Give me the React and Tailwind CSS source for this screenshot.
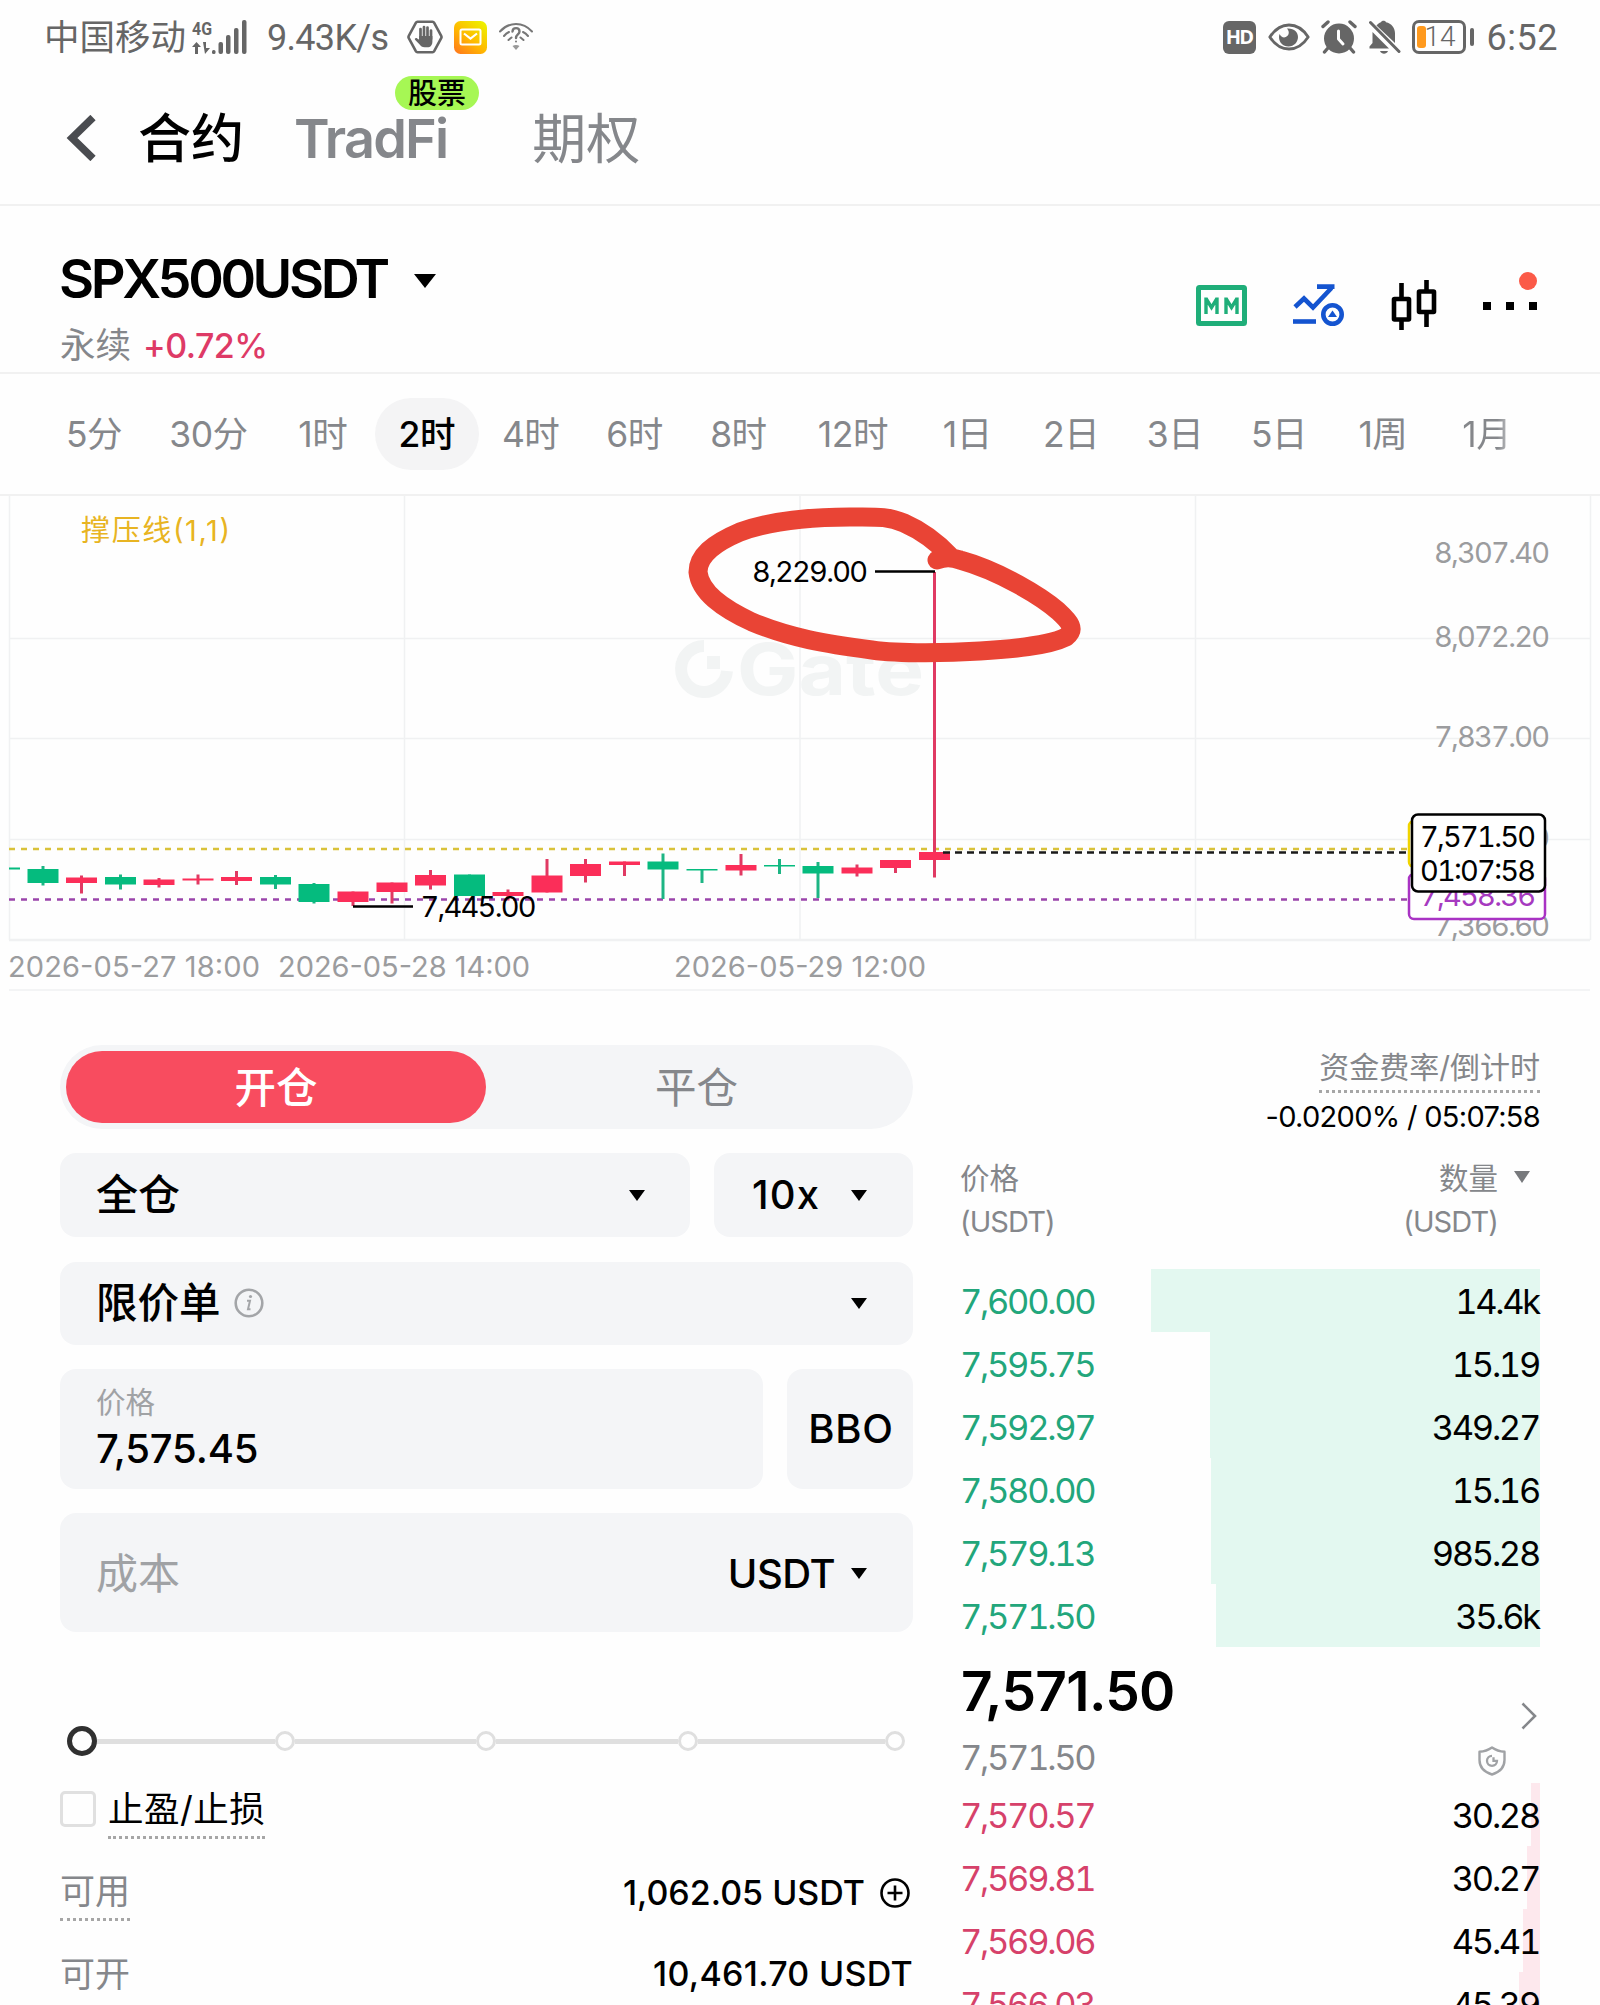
const SANS = 'font-["Inter","Noto_Sans_CJK_SC",sans-serif]';
const NUM = 'tabular-nums text-[34.5px] tracking-[-2.3px]';

const GREEN = '#05bb7e';
const RED = '#fb2e59';

// x centre, body top, body bottom, wick top, wick bottom, rising (red) or falling (green)
const CANDLES = [
  [43, 869, 883, 866, 885.5, 0],
  [81.5, 877.5, 883, 875.5, 893.5, 1],
  [120.5, 877, 884.5, 874.5, 889.5, 0],
  [159, 879.5, 885, 878, 887.5, 1],
  [198, 878.5, 880.5, 874.5, 884.5, 1],
  [236.5, 877, 881, 871, 885, 1],
  [275.5, 877, 884.5, 875, 889, 0],
  [314, 884, 902, 883, 903.5, 0],
  [353, 891.5, 902, 891.5, 906, 1],
  [392, 882.5, 892, 882.5, 903.5, 1],
  [430.5, 875, 885.5, 870, 889.5, 1],
  [469.5, 874.5, 896, 874.5, 896, 0],
  [508, 892, 896, 889.5, 900.5, 1],
  [547, 875.5, 892.5, 859, 892.5, 1],
  [585.5, 864, 876, 859, 882.5, 1],
  [624.5, 861.5, 865, 861.5, 876, 1],
  [663, 861.5, 869.5, 853.5, 899, 0],
  [702, 869, 870.5, 869, 883, 0],
  [741, 865, 870.5, 854, 875.5, 1],
  [779.5, 865, 866.5, 859, 874, 0],
  [818, 866, 873.5, 862, 898, 0],
  [857, 867.5, 873.5, 864.5, 876.5, 1],
  [895.5, 860, 868, 860, 873, 1],
  [934.5, 852, 860, 572, 877.5, 1],
];

const FRAMES = ['5分', '30分', '1时', '2时', '4时', '6时', '8时', '12时', '1日', '2日', '3日', '5日', '1周', '1月'];

const UPPER_BOOK = [
  ['7,600.00', '14.4k', 'w-[389px]'],
  ['7,595.75', '15.19', 'w-[330px]'],
  ['7,592.97', '349.27', 'w-[330px]'],
  ['7,580.00', '15.16', 'w-[329px]'],
  ['7,579.13', '985.28', 'w-[329px]'],
  ['7,571.50', '35.6k', 'w-[324px]'],
];

const LOWER_BOOK = [
  ['7,570.57', '30.28', 'w-[9px]'],
  ['7,569.81', '30.27', 'w-[13px]'],
  ['7,569.06', '45.41', 'w-[17px]'],
  ['7,566.03', '45.39', 'w-[21px]'],
];

function Caret({ className = 'w-4 h-[11px] text-black' }) {
  return (
    <svg viewBox="0 0 16 11" preserveAspectRatio="none" className={className}>
      <path d="M0 0h16L8 11z" fill="currentColor" />
    </svg>
  );
}

function StatusBar() {
  return (
    <div className="flex h-[74px] items-center justify-between pl-[44px] pr-[42px] text-[#666]">
      <div className="flex items-center">
        <span className={`${SANS} mt-px text-[35.5px] leading-none`}>中国移动</span>
        <svg viewBox="190 16 58 38" className="ml-[5px] mb-[2px] h-[38px] w-[58px]" fill="currentColor">
          <text x="191" y="34" fontSize="19" fontWeight="700" fontFamily="Roboto" textLength="20" lengthAdjust="spacingAndGlyphs">4G</text>
          <path d="M195.5 41l4.500 5h-3v7h-3v-7h-3zM202 41h3v6h4l-5 6z" />
          <rect x="211" y="49" width="3.500" height="4" rx="1.500" />
          <rect x="217.500" y="41" width="4.500" height="12" rx="2" />
          <rect x="225" y="34" width="4.500" height="19" rx="2" />
          <rect x="233" y="27" width="4.500" height="26" rx="2" />
          <rect x="241" y="19" width="4.500" height="34" rx="2" />
        </svg>
        <span className={'font-[Roboto,sans-serif] ml-[18px] mt-[2px] text-[36px] leading-none tracking-[-0.7px]'}>9.43K/s</span>
        <svg viewBox="0 0 36 34" className="ml-[19px] h-[34px] w-9">
          <path d="M10.500 1.800h15a2 2 0 0 1 1.700 1l7 13a2.500 2.500 0 0 1 0 2.400l-7 13a2 2 0 0 1-1.700 1h-15a2 2 0 0 1-1.700-1l-7-13a2.500 2.500 0 0 1 0-2.400l7-13a2 2 0 0 1 1.700-1z" fill="none" stroke="#666" strokeWidth="2.600" />
          <path d="M13.500 20V9M17 18V7M20.500 18V7.500M24 19V10.500" stroke="#666" strokeWidth="2.700" strokeLinecap="round" />
          <path d="M12.200 16h13.200v5.500c0 3.500-1.800 5.800-5 5.800h-2.800c-2.500 0-3.800-1-5.200-3l-4.400-4.600c-.8-1.200 1-2.300 2.200-1.300l2 1.400z" fill="#666" />
        </svg>
        <svg viewBox="0 0 33 33" className="ml-[11px] h-[33px] w-[33px]">
          <defs>
            <linearGradient id="mail" x1="0.100" y1="1" x2="0.900" y2="0">
              <stop offset="0" stopColor="#ff7a1c" />
              <stop offset="0.450" stopColor="#ffb800" />
              <stop offset="1" stopColor="#ecf400" />
            </linearGradient>
          </defs>
          <rect width="33" height="33" rx="6.500" fill="url(#mail)" />
          <rect x="6.500" y="8.500" width="20" height="15" rx="1.500" fill="none" stroke="#fff" strokeWidth="2" />
          <path d="M10 12.500l6.500 5 6.500-5" fill="none" stroke="#fff" strokeWidth="2.200" />
        </svg>
        <svg viewBox="0 0 34 28" className="ml-3 h-7 w-[34px]" fill="none" stroke="#777" strokeWidth="2" strokeLinecap="round">
          <path d="M1 8.500C10-1.500 24-1.500 33 8.500M5 13c1.500-1.800 3-3 5-4M29 13c-1.500-1.800-3-3-5-4M9.500 17l3-2.500M24.500 17l-3-2.500" />
          <path d="M13.500 8.500c.3-4.500 7-4.500 7 0 0 3-3.500 3-3.500 6.500" strokeWidth="2.400" />
          <circle cx="17" cy="18.500" r="1" fill="#777" stroke="none" />
          <path d="M17 27l-3.500-4c2-1.500 5-1.500 7 0z" fill="#999" stroke="none" />
        </svg>
      </div>
      <div className="flex items-center">
        <span className={'font-["Open_Sans",sans-serif] flex h-[33px] w-[33px] items-center justify-center rounded-[6px] bg-[#666] text-[20px] font-bold leading-none tracking-[-1.8px] text-white'}>HD</span>
        <svg viewBox="0 0 42 28" className="ml-3 h-7 w-[42px]">
          <path d="M1.800 14C7 6 13.500 2 21 2s14 4 19.200 12C35 22 28.500 26 21 26S7 22 1.800 14z" fill="none" stroke="#666" strokeWidth="2.800" strokeLinejoin="round" />
          <path d="M19 5.500c7-.5 11 3.500 11 8.500s-4 9.500-9.500 9.500S11 19.500 11 14c0-1 .2-2 .6-3 1.400 3 3.900 4 6.200 3 3.400-1.500 4-5.500 1.200-8.500z" fill="#666" />
        </svg>
        <svg viewBox="0 0 36 34" className="ml-[11px] h-[34px] w-9">
          <circle cx="18" cy="18.500" r="15" fill="#666" />
          <path d="M2 6.500l5-4.500M34 6.500L29 2" stroke="#666" strokeWidth="3.400" strokeLinecap="round" />
          <path d="M6.500 28.500L3.500 32M29.500 28.500l3 3.500" stroke="#666" strokeWidth="3.400" strokeLinecap="round" />
          <path d="M17.500 11v8l4.500 5" fill="none" stroke="#fff" strokeWidth="3" strokeLinecap="round" strokeLinejoin="round" />
        </svg>
        <svg viewBox="0 0 33 34" className="ml-[11px] h-[34px] w-[33px]">
          <path d="M4.500 12L21 28.500H1.500v-2l3-3.500zM8.500 5.500C10 3.500 12 2.500 13 2.300c.5-2 4.500-2 5 0 5.500 1.200 9 5.500 9 11V23z" fill="#666" />
          <path d="M2.500 2.500l28.500 29" stroke="#666" strokeWidth="3" strokeLinecap="round" />
          <path d="M12 31h8c-1.500 3.500-6.500 3.500-8 0z" fill="#666" />
        </svg>
        <div className="ml-[11px] flex h-[34px] w-[54px] items-center rounded-[7px] border-[3px] border-[#666] pl-[2px]">
          <div className="h-[22px] w-[9px] rounded-[3px] bg-[#ff9a1e]" />
          <span className={'font-[Roboto,sans-serif] -ml-px text-[28px] leading-none font-light'}>14</span>
        </div>
        <div className="ml-[4px] h-[18px] w-[4px] rounded-full bg-[#666]" />
        <span className={'font-[Roboto,sans-serif] ml-[13px] mt-[2px] text-[36px] leading-none tracking-[0.5px]'}>6:52</span>
      </div>
    </div>
  );
}

function TopTabs() {
  return (
    <div className={`${SANS} flex h-[132px] items-center border-b-2 border-[#f1f1f1] pl-[66px] text-[53px] leading-none text-[#85878b]`}>
      <svg viewBox="0 0 30 46" className="-mt-[2px] h-[46px] w-[30px]">
        <path d="M27 2.500L6 23l21 20.500" fill="none" stroke="#4a4c50" strokeWidth="7.500" />
      </svg>
      <span className="ml-[42px] font-medium text-black">合约</span>
      <div className="relative ml-[50px]">
        <span className="text-[54px] font-semibold tracking-[-1.8px]">TradFi</span>
        <span className="absolute -top-[36px] left-[101px] flex h-[34px] w-[84px] items-center justify-center rounded-full bg-[#a6f754] text-[29px] font-medium text-black">股票</span>
      </div>
      <span className="ml-[85px] pt-px text-[54px]">期权</span>
    </div>
  );
}

function Title() {
  return (
    <div className={`${SANS} flex h-[168px] justify-between border-b-2 border-[#f1f1f1] pl-[60px] pr-[63px]`}>
      <div className="pt-[43px]">
        <div className="-ml-px flex items-center leading-[60px]">
          <span className="text-[54px] font-semibold tracking-[-3.4px]">SPX500USDT</span>
          <Caret className="ml-[27px] mt-1 h-[14px] w-[22px] text-black" />
        </div>
        <div className="mt-[13px] flex items-center leading-[48px]">
          <span className="text-[35.5px] text-[#85878b]">永续</span>
          <span className="ml-3 text-[34px] font-medium tracking-[-0.5px] text-[#de3a66]">+0.72%</span>
        </div>
      </div>
      <div className="flex items-start pt-[72px]">
        <svg viewBox="0 0 51 41" className="mt-[7px] h-[41px] w-[51px]">
          <rect x="2.500" y="2.500" width="46" height="36" rx="1" fill="none" stroke="#1fae79" strokeWidth="5" />
          <path d="M10 29V12.500M21 29V12.500M10 13.500l5.500 9 5.500-9M30 29V12.500M41 29V12.500M30 13.500l5.500 9 5.500-9" fill="none" stroke="#1fae79" strokeWidth="3.400" />
        </svg>
        <svg viewBox="0 0 51 42" className="ml-[46px] mt-[6px] h-[42px] w-[51px]" fill="none" stroke="#1454d0" strokeWidth="4.600">
          <path d="M2 23l9-8.500 9 9L38.500 4M24 2.600h17.500" />
          <path d="M0 37.500h23" />
          <circle cx="39.500" cy="30.500" r="9.200" />
          <path d="M39.500 26.500l4.500 6.500h-9z" fill="#1454d0" stroke="none" />
        </svg>
        <svg viewBox="0 0 46 50" className="ml-[47px] mt-[2px] h-[50px] w-[46px]" fill="none" stroke="#000" strokeWidth="4.600">
          <path d="M10.500 3v16M10.500 41v9M35.500 0v12M35.500 33v14" />
          <rect x="3" y="19" width="15" height="20.500" rx="0.500" />
          <rect x="28" y="11.500" width="15" height="20.500" rx="0.500" />
        </svg>
        <div className="relative ml-[46px] mt-[24px] flex gap-[15px]">
          <span className="h-2 w-2 bg-black" />
          <span className="h-2 w-2 bg-black" />
          <span className="h-2 w-2 bg-black" />
          <span className="absolute -top-[30px] right-0 h-[18px] w-[18px] rounded-full bg-[#fb5a48]" />
        </div>
      </div>
    </div>
  );
}

function Timeframes() {
  return (
    <div className={`${SANS} flex h-[122px] items-center border-b-2 border-[#f1f1f1] pl-[42px] text-[35.5px] leading-none text-[#85878b]`}>
      {FRAMES.map((f) => (
        <span
          key={f}
          className={
            (f.length > 2 ? 'w-[125px] ' : 'w-[103.9px] ') +
            'flex h-[72px] shrink-0 items-center justify-center rounded-[36px] pt-px tracking-[-0.5px] ' +
            (f === '2时' ? 'bg-[#f4f4f5] font-medium text-black' : f === '1月' ? 'bg-linear-to-r from-[#85878b] from-60% to-[#d5d6d8] to-75% bg-clip-text text-transparent' : '')
          }
        >
          {f}
        </span>
      ))}
    </div>
  );
}

function Label({ x, y, w, children, fill = '#9b9c9e', className = 'tabular-nums' }) {
  return (
    <text x={x} y={y + 10.3} textLength={w} fill={fill} fontSize="29" fontFamily="Inter" className={className}>
      {children}
    </text>
  );
}

function Chart() {
  return (
    <svg viewBox="0 496 1600 495" className="block h-[495px] w-[1600px]">
      <g stroke="#f0f1f2" strokeWidth="1.500">
        <path d="M9.500 496V940M404.500 496V940M800 496V940M1195.500 496V940M1590.500 496V940" />
        <path d="M9 638.500H1590M9 738.500H1590M9 839.500H1590M9 990H1590" />
        <path d="M9 940H1590" strokeWidth="2.500" />
      </g>
      <path d="M704 646A23 23 0 1 0 727 671" fill="none" stroke="#f2f4f4" strokeWidth="12" />
      <rect x="707" y="656" width="13" height="13" fill="#f2f4f4" />
      <text x="737" y="694.500" textLength="187" lengthAdjust="spacingAndGlyphs" fontSize="71" fontWeight="700" fontFamily="Inter" fill="#f2f4f4">Gate</text>

      <text x="81" y="541" textLength="149" fontSize="29" fontFamily="Inter, Noto Sans CJK SC" fill="#e8b422">撑压线(1,1)</text>

      <Label x={1434} y={553} w={116}>8,307.40</Label>
      <Label x={1434} y={637} w={116}>8,072.20</Label>
      <Label x={1434} y={737} w={116}>7,837.00</Label>
      <Label x={1434} y={838} w={116}>7,601.80</Label>
      <Label x={1434} y={926} w={116}>7,366.60</Label>

      <path d="M9 849H1408" stroke="#d9c23a" strokeWidth="2.500" strokeDasharray="6 6" />
      <path d="M9 899.500H1408" stroke="#9a44ab" strokeWidth="2.500" strokeDasharray="6 6" />

      <path d="M9 868.500H20" stroke={GREEN} strokeWidth="2" />
      {CANDLES.map(([x, top, bottom, high, low, up]) => (
        <g key={x} fill={up ? RED : GREEN}>
          <rect x={x - 1.500} y={high} width="3" height={low - high} fill={up ? '#e03a63' : '#1db584'} />
          <rect x={x - 15.500} y={top} width="31" height={bottom - top} />
        </g>
      ))}
      <path d="M943 852.500H1408" stroke="#1a1a1a" strokeWidth="2.600" strokeDasharray="7 5" />

      <path d="M353 906.500H413M875 571.500H935" stroke="#000" strokeWidth="2.500" />
      <Label x={420.5} y={907} w={116} fill="#000">7,445.00</Label>
      <Label x={752} y={571.5} w={116} fill="#000">8,229.00</Label>

      <rect x="1409" y="821" width="60" height="46" rx="5" fill="#fff" stroke="#f0d400" strokeWidth="2.500" />
      <rect x="1409" y="874" width="136" height="45" rx="5" fill="#fff" stroke="#a933c4" strokeWidth="2.500" />
      <Label x={1420} y={896} w={116} fill="#a63ac0">7,458.36</Label>
      <rect x="1412" y="814.500" width="133" height="77" rx="6" fill="#fff" stroke="#000" strokeWidth="2.500" />
      <Label x={1420} y={836.5} w={116} fill="#000">7,571.50</Label>
      <Label x={1420} y={870.5} w={116} fill="#000">01:07:58</Label>

      <Label x={8} y={966.5} w={252} className="">2026-05-27 18:00</Label>
      <Label x={278} y={966.5} w={252} className="">2026-05-28 14:00</Label>
      <Label x={674} y={966.5} w={252} className="">2026-05-29 12:00</Label>

      <path
        d="M951 557C937 542 920 530 904 523C888 516 876 517 850 517C822 517 778 518 740 532C712 544 698 556 698 572C700 592 722 608 752 622C790 638 826 644 872 650C900 654 950 653 980 651C1012 649 1048 646 1066 637C1076 629 1070 622 1058 611C1042 597 1000 571 960 560C952 557 944 557 937 560"
        fill="none"
        stroke="#e94435"
        strokeWidth="19"
        strokeLinecap="round"
        strokeLinejoin="round"
      />
    </svg>
  );
}

function OrderForm() {
  return (
    <div className={`${SANS} w-[853px] text-[40px] leading-none`}>
      <div className="flex h-[84px] rounded-full bg-[#f4f5f7] p-[6px] text-[41.5px]">
        <span className="flex w-[420px] items-center justify-center rounded-full bg-[#f84c5f] pt-[3px] font-medium text-white">开仓</span>
        <span className="flex flex-1 items-center justify-center pt-[3px] text-[#85878b]">平仓</span>
      </div>
      <div className="mt-[24px] flex h-[84px] gap-6">
        <div className="flex w-[630px] items-center justify-between rounded-2xl bg-[#f4f5f7] pl-9 pr-[45px]">
          <span className="text-[42px] font-medium">全仓</span>
          <Caret />
        </div>
        <div className="flex flex-1 items-center justify-between rounded-2xl bg-[#f4f5f7] pl-[38px] pr-[46px]">
          <span className="font-medium tracking-[1.200px]">10x</span>
          <Caret />
        </div>
      </div>
      <div className="mt-[25px] flex h-[83px] items-center rounded-2xl bg-[#f4f5f7] pl-9 pr-[46px]">
        <span className="text-[41.5px] font-medium">限价单</span>
        <svg viewBox="0 0 30 30" className="-mt-px ml-[13px] h-[30px] w-[30px]" fill="none" stroke="#a3a5a8" strokeWidth="2.600">
          <circle cx="15" cy="15" r="13.300" />
          <path d="M13 12.800h3l-2 8.500h2.500" strokeWidth="2" />
          <circle cx="16.500" cy="8.500" r="1.600" fill="#a3a5a8" stroke="none" />
        </svg>
        <Caret className="ml-auto h-[11px] w-4 text-black" />
      </div>
      <div className="mt-6 flex h-[120px] gap-6">
        <div className="flex w-[703px] flex-col rounded-2xl bg-[#f4f5f7] pl-9 pt-[13px]">
          <span className="text-[29.5px] leading-[40px] text-[#a0a2a5]">价格</span>
          <span className="mt-[3px] font-medium leading-[48px] tracking-[-0.15px]">7,575.45</span>
        </div>
        <div className="flex flex-1 items-center justify-center rounded-2xl bg-[#f4f5f7] pl-[2px] font-medium tracking-[0.8px]">BBO</div>
      </div>
      <div className="mt-6 flex h-[119px] items-center rounded-2xl bg-[#f4f5f7] pl-9 pr-[46px]">
        <span className="pt-[3px] text-[42px] text-[#a0a2a5]">成本</span>
        <span className="ml-auto pt-[2px] font-medium tracking-[-0.5px]">USDT</span>
        <Caret className="ml-4 mt-px h-[11px] w-4 text-black" />
      </div>

      <div className="mt-[94px] flex h-[30px] items-center pl-[6.5px]">
        <span className="h-[30px] w-[30px] rounded-full border-[5px] border-[#303030]" />
        <span className="h-[5px] w-[178px] bg-[#dfdfdf]" />
        <span className="h-[20px] w-[20px] rounded-full border-[3px] border-[#dfdfdf]" />
        <span className="h-[5px] w-[181px] bg-[#dfdfdf]" />
        <span className="h-[20px] w-[20px] rounded-full border-[3px] border-[#dfdfdf]" />
        <span className="h-[5px] w-[182px] bg-[#dfdfdf]" />
        <span className="h-[20px] w-[20px] rounded-full border-[3px] border-[#dfdfdf]" />
        <span className="h-[5px] w-[187px] bg-[#dfdfdf]" />
        <span className="h-[20px] w-[20px] rounded-full border-[3px] border-[#dfdfdf]" />
      </div>

      <div className="mt-[28px] flex text-[35.5px]">
        <span className="mt-[7px] h-9 w-9 rounded-[5px] border-[3px] border-[#e0e0e0]" />
        <span className="ml-3 border-b-[3px] border-dotted border-[#a6a6a6] leading-[52px] tracking-[0.5px]">止盈/止损</span>
      </div>
      <div className="mt-[26px] flex justify-between text-[35px] leading-[52px]">
        <span className="border-b-[3px] border-dotted border-[#a6a6a6] text-[#85878b]">可用</span>
        <span className="flex h-[56px] items-center text-[34px] font-medium">
          1,062.05 USDT
          <svg viewBox="0 0 30 30" className="ml-[15px] mr-[3px] h-[30px] w-[30px]" fill="none" stroke="#000" strokeWidth="2.600">
            <circle cx="15" cy="15" r="13.500" />
            <path d="M15 7.500v15M7.500 15h15" />
          </svg>
        </span>
      </div>
      <div className="mt-[27px] flex justify-between text-[35px] leading-[52px]">
        <span className="text-[#85878b]">可开</span>
        <span className="text-[34px] font-medium tracking-[0.3px]">10,461.70 USDT</span>
      </div>
    </div>
  );
}

function BookRow({ price, amount, bar, priceClass, barClass }) {
  return (
    <div className="relative flex h-[63px] items-center justify-between pt-[3px]">
      <span className={'absolute right-0 top-0 h-full ' + bar + ' ' + barClass} />
      <span className={'relative -ml-[2px] ' + priceClass}>{price}</span>
      <span className="relative mr-[1px]">{amount}</span>
    </div>
  );
}

function OrderBook() {
  return (
    <div className={`${SANS} w-[578px] text-[29px] text-[#85878b]`}>
      <div className="flex flex-col items-end">
        <span className="border-b-[3px] border-dotted border-[#a6a6a6] text-[30px] leading-[45px]">资金费率/倒计时</span>
        <span className="mt-[4px] leading-[40px] tracking-[-0.7px] text-black">-0.0200% / 05:07:58</span>
      </div>
      <div className="mt-[21px] flex justify-between leading-[40px]">
        <div className="-ml-[2px] flex flex-col gap-[4px]">
          <span className="text-[29.5px]">价格</span>
          <span className="tracking-[-0.9px]">(USDT)</span>
        </div>
        <div className="flex pr-[10px]">
          <div className="flex flex-col items-end gap-[4px]">
            <span className="text-[29.5px]">数量</span>
            <span className="tracking-[-0.9px]">(USDT)</span>
          </div>
          <Caret className="ml-4 mt-[13px] h-[12px] w-4 text-[#77797c]" />
        </div>
      </div>
      <div className={`${NUM} mt-[27px] leading-none text-black`}>
        {UPPER_BOOK.map(([price, amount, bar]) => (
          <BookRow key={price} price={price} amount={amount} bar={bar} priceClass="text-[#22a67b]" barClass="bg-[#e3f8f0]" />
        ))}
      </div>
      <div className="mt-[10px] flex justify-between">
        <div>
          <div className="-ml-px mt-px text-[55px] font-semibold leading-[66px] tracking-[-0.7px] text-black">7,571.50</div>
          <div className={`${NUM} -ml-[2px] mt-[14px] leading-[40px]`}>7,571.50</div>
        </div>
        <div className="flex flex-col items-end pt-[45px]">
          <svg viewBox="0 0 16 28" className="mr-[3px] h-7 w-4">
            <path d="M1.500 1.500L14 14 1.500 26.500" fill="none" stroke="#85878b" strokeWidth="2.600" />
          </svg>
          <svg viewBox="0 0 28 30" className="mr-[34px] mt-[16px] h-[30px] w-7" fill="none" stroke="#a0a2a5" strokeWidth="2.400">
            <path d="M14 1.500c4 2.800 8 4 12.500 4.300V14c0 7-4.500 12-12.500 14.500C6 26 1.500 21 1.500 14V5.800C6 5.500 10 4.300 14 1.500z" strokeLinejoin="round" />
            <path d="M14 9.800a5 5 0 1 0 5 5h-3.500v-3.500" strokeWidth="2.300" />
          </svg>
        </div>
      </div>
      <div className={`${NUM} mt-[5px] leading-none text-black`}>
        {LOWER_BOOK.map(([price, amount, bar]) => (
          <BookRow key={price} price={price} amount={amount} bar={bar} priceClass="text-[#d6416a]" barClass="bg-[#fde8ed]" />
        ))}
      </div>
    </div>
  );
}

export default function App() {
  return (
    <div className="h-[2005px] w-[1600px] overflow-hidden bg-[#fefefe] text-black">
      <StatusBar />
      <TopTabs />
      <Title />
      <Timeframes />
      <Chart />
      <div className="flex justify-between pl-[60px] pr-[60px] pt-[54px]">
        <OrderForm />
        <OrderBook />
      </div>
    </div>
  );
}
